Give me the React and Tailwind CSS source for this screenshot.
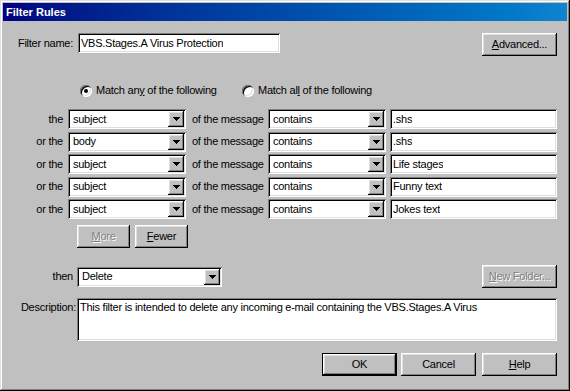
import React from 'react';

const sunken =
  'bg-white shadow-[inset_1px_1px_0_#808080,inset_-1px_-1px_0_#fff,inset_2px_2px_0_#000,inset_-2px_-2px_0_#dfdfdf]';
const raised =
  'bg-[#c0c0c0] shadow-[inset_-1px_-1px_0_#000,inset_1px_1px_0_#fff,inset_-2px_-2px_0_#808080,inset_2px_2px_0_#dfdfdf]';

const Arrow = () => (
  <svg width="7" height="4" viewBox="0 0 7 4" shapeRendering="crispEdges">
    <path d="M0 0h7v1h-1v1h-1v1h-1v1h-1v-1h-1v-1h-1v-1h-1z" fill="#000" />
  </svg>
);

const Combo = ({ value, className = '' }) => (
  <div className={`${sunken} h-[20px] flex items-center pl-[5px] pr-[2px] shrink-0 ${className}`}>
    <span className="flex-1 truncate leading-[13px]">{value}</span>
    <div className={`${raised} w-[16px] h-[16px] flex items-center justify-center`}>
      <Arrow />
    </div>
  </div>
);

const Field = ({ value, className = '' }) => (
  <div className={`${sunken} h-[20px] flex items-center pl-[3px] shrink-0 ${className}`}>
    <span className="truncate leading-[13px]">{value}</span>
  </div>
);

const Button = ({ children, className = '', disabled, isDefault }) => (
  <div
    className={`${raised} h-[23px] flex items-center justify-center shrink-0 ${
      isDefault ? 'border border-black' : ''
    } ${disabled ? 'text-[#808080] [text-shadow:1px_1px_0_#fff]' : ''} ${className}`}
  >
    {children}
  </div>
);

const Radio = ({ checked }) => (
  <div className="w-[12px] h-[12px] rounded-full bg-white shadow-[inset_1px_1px_0_#808080,inset_-1px_-1px_0_#fff,inset_2px_2px_0_#000,inset_-2px_-2px_0_#dfdfdf] flex items-center justify-center shrink-0">
    {checked && <div className="w-[4px] h-[4px] rounded-full bg-black" />}
  </div>
);

const rules = [
  { label: 'the', field: 'subject', text: '.shs' },
  { label: 'or the', field: 'body', text: '.shs' },
  { label: 'or the', field: 'subject', text: 'Life stages' },
  { label: 'or the', field: 'subject', text: 'Funny text' },
  { label: 'or the', field: 'subject', text: 'Jokes text' },
];

export default function App() {
  return (
    <div className="w-[570px] h-[391px] bg-[#c0c0c0] p-[3px] flex flex-col text-[11px] leading-[13px] tracking-[-0.25px] text-black font-['Liberation_Sans',Arial,sans-serif] shadow-[inset_-1px_-1px_0_#000,inset_1px_1px_0_#dfdfdf,inset_-2px_-2px_0_#808080,inset_2px_2px_0_#fff]">
      {/* Title bar */}
      <div className="h-[18px] bg-linear-to-r from-[#000080] to-[#1084d0] flex items-center pl-[3px] text-white font-bold tracking-normal">
        Filter Rules
      </div>

      <div className="flex-1 flex flex-col">
        {/* Filter name */}
        <div className="mt-[12px] flex items-start">
          <div className="w-[70px] h-[20px] flex items-center justify-end">Filter name:</div>
          <Field value="VBS.Stages.A Virus Protection" className="ml-[5px] w-[202px]" />
          <Button className="ml-auto mr-[10px] w-[75px]">
            <span><span className="underline">A</span>dvanced...</span>
          </Button>
        </div>

        {/* Match options */}
        <div className="mt-[28px] h-[13px] flex items-center pl-[77px]">
          <div className="w-[162px] flex items-center">
            <Radio checked />
            <span className="ml-[4px]">
              Match an<span className="underline">y</span> of the following
            </span>
          </div>
          <div className="flex items-center">
            <Radio />
            <span className="ml-[4px]">
              Match al<span className="underline">l</span> of the following
            </span>
          </div>
        </div>

        {/* Rules */}
        <div className="mt-[12px] flex flex-col gap-[2.5px]">
          {rules.map((r, i) => (
            <div key={i} className="flex items-center">
              <div className="w-[60px] text-right shrink-0">{r.label}</div>
              <Combo value={r.field} className="ml-[5px] w-[118px]" />
              <div className="w-[82px] pl-[6px] shrink-0">of the message</div>
              <Combo value="contains" className="w-[118px]" />
              <Field value={r.text} className="ml-[4px] w-[167px]" />
            </div>
          ))}
        </div>

        {/* More / Fewer */}
        <div className="mt-[6px] flex pl-[74px] gap-[5px]">
          <Button disabled className="w-[53px]">
            <span><span className="underline">M</span>ore</span>
          </Button>
          <Button className="w-[53px]">
            <span><span className="underline">F</span>ewer</span>
          </Button>
        </div>

        {/* Action */}
        <div className="mt-[17px] flex items-center">
          <div className="w-[70px] text-right shrink-0">then</div>
          <Combo value="Delete" className="ml-[4px] w-[145px]" />
          <Button disabled className="ml-auto mr-[10px] w-[75px]">
            <span><span className="underline">N</span>ew Folder...</span>
          </Button>
        </div>

        {/* Description */}
        <div className="mt-[10px] flex items-start">
          <div className="w-[73px] text-right shrink-0 pt-[3px]">Description:</div>
          <div className={`${sunken} ml-[1px] w-[480px] h-[43px] pl-[3px] pt-[3px]`}>
            This filter is intended to delete any incoming e-mail containing the VBS.Stages.A Virus
          </div>
        </div>

        {/* Dialog buttons */}
        <div className="mt-[12px] flex justify-end pr-[10px]">
          <Button isDefault className="w-[75px]">OK</Button>
          <Button className="ml-[4px] w-[75px]">Cancel</Button>
          <Button className="ml-[6px] w-[75px]">
            <span><span className="underline">H</span>elp</span>
          </Button>
        </div>
      </div>
    </div>
  );
}
